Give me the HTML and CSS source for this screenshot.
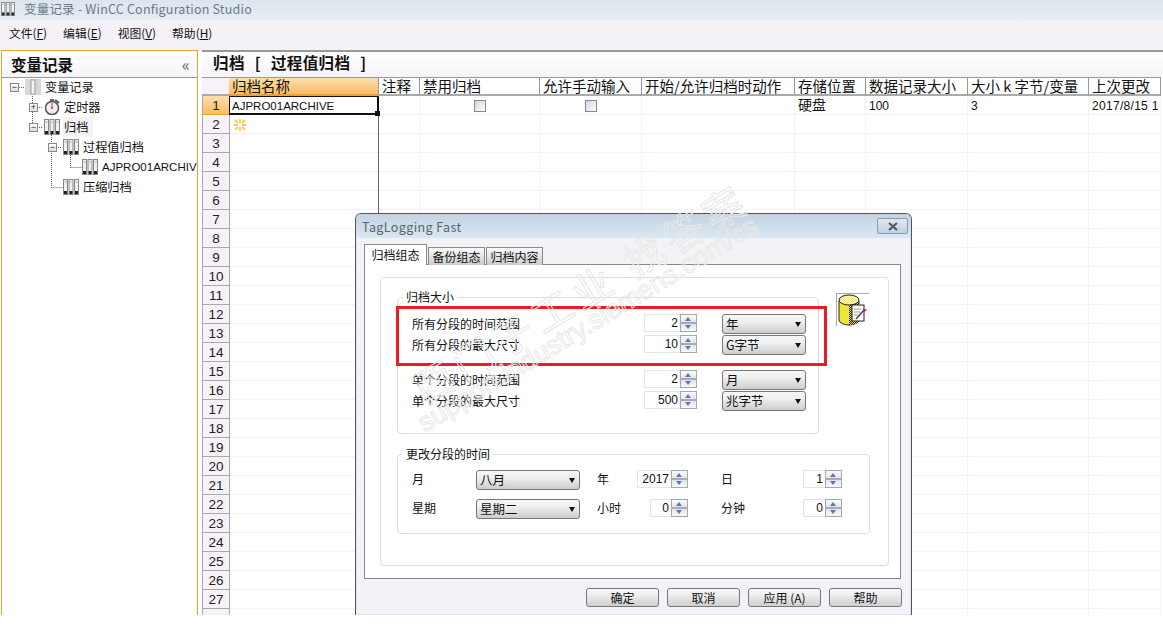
FILE: index.html
```html
<!DOCTYPE html>
<html>
<head>
    <meta charset="utf-8">
    <title>WinCC Configuration Studio</title>
    <link rel="stylesheet" href="styles.css">
</head>
<body>
    <svg class="defs" width="0" height="0">
        <symbol id="binders" viewBox="0 0 16 16">
            <g stroke="#888" stroke-width="1">
                <rect x="0.5" y="0.5" width="4" height="15" fill="#f0f0f0"/>
                <rect x="6" y="0.5" width="4" height="15" fill="#f0f0f0"/>
                <rect x="11.500" y="0.5" width="4" height="15" fill="#f0f0f0"/>
            </g>
            <path d="M1 12h3v3H1zM6.500 12h3v3h-3zM12 12h3v3h-3z" fill="#222"/>
            <path d="M1 3h3M6.500 3h3M12 3h3" stroke="#bbb"/>
        </symbol>
        <pattern id="dither" width="2" height="2" patternUnits="userSpaceOnUse">
            <rect width="2" height="2" fill="#e8e04a"/>
            <rect width="1" height="1" fill="#222"/>
            <rect x="1" y="1" width="1" height="1" fill="#222"/>
        </pattern>
        <pattern id="dither-top" width="2" height="2" patternUnits="userSpaceOnUse">
            <rect width="2" height="2" fill="#f2ea3c"/>
            <rect width="1" height="1" fill="#fff"/>
            <rect x="1" y="1" width="1" height="1" fill="#fff"/>
        </pattern>
    </svg>

    <div class="app">
        <div class="titlebar">
            <svg class="titlebar-icon"><use href="#binders"/></svg>
            <span>变量记录 - WinCC Configuration Studio</span>
        </div>

        <div class="menubar">
            <span>文件(<u>F</u>)</span>
            <span>编辑(<u>E</u>)</span>
            <span>视图(<u>V</u>)</span>
            <span>帮助(<u>H</u>)</span>
        </div>

        <div class="main">
            <!-- Left tree panel -->
            <div class="sidebar">
                <div class="sidebar-head">
                    <span>变量记录</span>
                    <span class="collapse">«</span>
                </div>
                <div class="tree">
                    <svg class="tree-lines" width="197" height="130">
                        <path d="M17 10.500h7M32.500 17v34M37 30.500h6M37 50.500h6M51.500 58v53M56 70.500h6M51.500 110.500h11M70.500 78v13M70.500 90.500h11" fill="none" stroke="#666" stroke-dasharray="1 1"/>
                    </svg>
                    <div class="node lvl1">
                        <span class="expander">−</span>
                        <svg class="node-icon root-icon" viewBox="0 0 16 16">
                            <rect width="16" height="16" fill="#d8d8d8"/>
                            <rect x="6" y="1" width="4" height="14" fill="#f4f4f4" stroke="#999"/>
                        </svg>
                        <span class="node-text">变量记录</span>
                    </div>
                    <div class="node lvl2">
                        <span class="expander">+</span>
                        <svg class="node-icon" viewBox="0 0 16 16">
                            <path d="M11 1l4 3" stroke="#555" stroke-width="2"/>
                            <rect x="6" y="0" width="4" height="2" fill="#666"/>
                            <circle cx="8" cy="9" r="6.500" fill="#f2f0ec" stroke="#555" stroke-width="1.500"/>
                            <path d="M8 9V4" stroke="#c33"/>
                            <circle cx="8" cy="9" r="1" fill="#944"/>
                        </svg>
                        <span class="node-text">定时器</span>
                    </div>
                    <div class="node lvl2">
                        <span class="expander">−</span>
                        <svg class="node-icon"><use href="#binders"/></svg>
                        <span class="node-text picked">归档</span>
                    </div>
                    <div class="node lvl3">
                        <span class="expander">−</span>
                        <svg class="node-icon"><use href="#binders"/></svg>
                        <span class="node-text">过程值归档</span>
                    </div>
                    <div class="node lvl4">
                        <span class="expander blank"></span>
                        <svg class="node-icon"><use href="#binders"/></svg>
                        <span class="node-text latin">AJPRO01ARCHIVE</span>
                    </div>
                    <div class="node lvl3">
                        <span class="expander blank"></span>
                        <svg class="node-icon"><use href="#binders"/></svg>
                        <span class="node-text">压缩归档</span>
                    </div>
                </div>
            </div>

            <!-- Archive table -->
            <div class="content">
                <div class="content-head">归档 [ 过程值归档 ]</div>
                <table class="sheet">
                    <colgroup>
                        <col class="c-num"><col class="c-name"><col class="c-note"><col class="c-off"><col class="c-manual"><col class="c-action"><col class="c-store"><col class="c-size"><col class="c-var"><col class="c-date">
                    </colgroup>
                    <tr>
                        <th class="corner"></th>
                        <th class="picked-col">归档名称</th>
                        <th>注释</th>
                        <th>禁用归档</th>
                        <th>允许手动输入</th>
                        <th>开始/允许归档时动作</th>
                        <th>存储位置</th>
                        <th>数据记录大小</th>
                        <th>大小 k 字节/变量</th>
                        <th>上次更改</th>
                    </tr>
                    <tr class="first-row">
                        <th class="num picked-row">1</th>
                        <td class="name active">AJPRO01ARCHIVE<i class="handle"></i></td>
                        <td></td>
                        <td class="mid"><span class="check"></span></td>
                        <td class="mid"><span class="check"></span></td>
                        <td></td>
                        <td class="cjk">硬盘</td>
                        <td class="val">100</td>
                        <td class="val">3</td>
                        <td class="val clip">2017/8/15 1</td>
                    </tr>
                    <tr>
                        <th class="num">2</th>
                        <td class="name">
                            <svg class="new-row" viewBox="0 0 12 12">
                                <path d="M6 0v4M6 8v4M0 6h4M8 6h4M1 1l3 3M8 8l3 3M11 1L8 4M4 8l-3 3" stroke="#f2cf4e" stroke-width="1.800"/>
                            </svg>
                        </td>
                        <td></td><td></td><td></td><td></td><td></td><td></td><td></td><td></td>
                    </tr>
                    <tr><th class="num">3</th><td class="name"></td><td></td><td></td><td></td><td></td><td></td><td></td><td></td><td></td></tr>
                    <tr><th class="num">4</th><td class="name"></td><td></td><td></td><td></td><td></td><td></td><td></td><td></td><td></td></tr>
                    <tr><th class="num">5</th><td class="name"></td><td></td><td></td><td></td><td></td><td></td><td></td><td></td><td></td></tr>
                    <tr><th class="num">6</th><td class="name"></td><td></td><td></td><td></td><td></td><td></td><td></td><td></td><td></td></tr>
                    <tr><th class="num">7</th><td class="name"></td><td></td><td></td><td></td><td></td><td></td><td></td><td></td><td></td></tr>
                    <tr><th class="num">8</th><td class="name"></td><td></td><td></td><td></td><td></td><td></td><td></td><td></td><td></td></tr>
                    <tr><th class="num">9</th><td class="name"></td><td></td><td></td><td></td><td></td><td></td><td></td><td></td><td></td></tr>
                    <tr><th class="num">10</th><td class="name"></td><td></td><td></td><td></td><td></td><td></td><td></td><td></td><td></td></tr>
                    <tr><th class="num">11</th><td class="name"></td><td></td><td></td><td></td><td></td><td></td><td></td><td></td><td></td></tr>
                    <tr><th class="num">12</th><td class="name"></td><td></td><td></td><td></td><td></td><td></td><td></td><td></td><td></td></tr>
                    <tr><th class="num">13</th><td class="name"></td><td></td><td></td><td></td><td></td><td></td><td></td><td></td><td></td></tr>
                    <tr><th class="num">14</th><td class="name"></td><td></td><td></td><td></td><td></td><td></td><td></td><td></td><td></td></tr>
                    <tr><th class="num">15</th><td class="name"></td><td></td><td></td><td></td><td></td><td></td><td></td><td></td><td></td></tr>
                    <tr><th class="num">16</th><td class="name"></td><td></td><td></td><td></td><td></td><td></td><td></td><td></td><td></td></tr>
                    <tr><th class="num">17</th><td class="name"></td><td></td><td></td><td></td><td></td><td></td><td></td><td></td><td></td></tr>
                    <tr><th class="num">18</th><td class="name"></td><td></td><td></td><td></td><td></td><td></td><td></td><td></td><td></td></tr>
                    <tr><th class="num">19</th><td class="name"></td><td></td><td></td><td></td><td></td><td></td><td></td><td></td><td></td></tr>
                    <tr><th class="num">20</th><td class="name"></td><td></td><td></td><td></td><td></td><td></td><td></td><td></td><td></td></tr>
                    <tr><th class="num">21</th><td class="name"></td><td></td><td></td><td></td><td></td><td></td><td></td><td></td><td></td></tr>
                    <tr><th class="num">22</th><td class="name"></td><td></td><td></td><td></td><td></td><td></td><td></td><td></td><td></td></tr>
                    <tr><th class="num">23</th><td class="name"></td><td></td><td></td><td></td><td></td><td></td><td></td><td></td><td></td></tr>
                    <tr><th class="num">24</th><td class="name"></td><td></td><td></td><td></td><td></td><td></td><td></td><td></td><td></td></tr>
                    <tr><th class="num">25</th><td class="name"></td><td></td><td></td><td></td><td></td><td></td><td></td><td></td><td></td></tr>
                    <tr><th class="num">26</th><td class="name"></td><td></td><td></td><td></td><td></td><td></td><td></td><td></td><td></td></tr>
                    <tr><th class="num">27</th><td class="name"></td><td></td><td></td><td></td><td></td><td></td><td></td><td></td><td></td></tr>
                    <tr><th class="num"></th><td class="name"></td><td></td><td></td><td></td><td></td><td></td><td></td><td></td><td></td></tr>
                </table>
            </div>
        </div>

        <!-- TagLogging Fast dialog -->
        <div class="dialog">
            <div class="dialog-title">
                <span>TagLogging Fast</span>
                <span class="close">
                    <svg width="12" height="9" viewBox="0 0 12 9"><path d="M2 1l8 7M10 1L2 8" stroke="#556" stroke-width="2.200"/></svg>
                </span>
            </div>
            <div class="dialog-body">
                <div class="tabs">
                    <span class="tab on">归档组态</span>
                    <span class="tab">备份组态</span>
                    <span class="tab">归档内容</span>
                </div>
                <div class="tab-panel">
                    <div class="inner-box">
                        <div class="size-row">
                            <fieldset class="group group-size">
                                <legend>归档大小</legend>
                                <div class="size-set">
                                    <span>所有分段的时间范围</span>
                                    <span class="spin"><span class="spin-val">2</span><span class="spin-btn"></span></span>
                                    <span class="combo size-combo">年</span>
                                    <span>所有分段的最大尺寸</span>
                                    <span class="spin"><span class="spin-val">10</span><span class="spin-btn"></span></span>
                                    <span class="combo size-combo">G字节</span>
                                </div>
                                <div class="size-set next">
                                    <span>单个分段的时间范围</span>
                                    <span class="spin"><span class="spin-val">2</span><span class="spin-btn"></span></span>
                                    <span class="combo size-combo">月</span>
                                    <span>单个分段的最大尺寸</span>
                                    <span class="spin"><span class="spin-val">500</span><span class="spin-btn"></span></span>
                                    <span class="combo size-combo">兆字节</span>
                                </div>
                            </fieldset>
                            <svg class="db-icon" viewBox="0 0 33 33">
                                <path d="M.5 33V.5H33" fill="none" stroke="#aaa"/>
                                <path d="M3 8v19c0 3 6 5 10 5s10-2 10-5V8z" fill="#efe63a" stroke="#222"/>
                                <path d="M13 10h10v17c0 3-5 5-10 5z" fill="url(#dither)"/>
                                <ellipse cx="13" cy="7" rx="10" ry="5" fill="url(#dither-top)" stroke="#222"/>
                                <rect x="16" y="12" width="12" height="16" fill="#fff" stroke="#222"/>
                                <path d="M18 16h7M18 19h6M18 22h4" stroke="#999"/>
                                <path d="M20 26l8-9" stroke="#444" stroke-width="1.500"/>
                                <path d="M27 15l4 2-3 2z" fill="#d22"/>
                            </svg>
                        </div>
                        <fieldset class="group group-time">
                            <legend>更改分段的时间</legend>
                            <div class="time-set">
                                <span>月</span>
                                <span class="combo">八月</span>
                                <span class="after-combo">年</span>
                                <span class="spin wide"><span class="spin-val">2017</span><span class="spin-btn"></span></span>
                                <span class="after-spin">日</span>
                                <span class="spin small"><span class="spin-val">1</span><span class="spin-btn"></span></span>
                                <span>星期</span>
                                <span class="combo">星期二</span>
                                <span class="after-combo">小时</span>
                                <span class="spin small end"><span class="spin-val">0</span><span class="spin-btn"></span></span>
                                <span class="after-spin">分钟</span>
                                <span class="spin small"><span class="spin-val">0</span><span class="spin-btn"></span></span>
                            </div>
                        </fieldset>
                    </div>
                </div>
                <div class="dialog-buttons">
                    <span class="btn">确定</span>
                    <span class="btn">取消</span>
                    <span class="btn">应用 (A)</span>
                    <span class="btn">帮助</span>
                </div>
            </div>
        </div>

        <!-- Annotation and watermark over the dialog -->
        <div class="red-box"></div>
        <div class="mark mark-big">西门子工业 找答案</div>
        <div class="mark mark-small">support.industry.siemens.com/cs</div>
    </div>
</body>
</html>
```

FILE: styles.css
```css
* {
    box-sizing: border-box;
}

body {
    margin: 0;
    background: #fff;
    color: #111;
    font-family: "Noto Sans CJK SC", "Liberation Sans", sans-serif;
    font-size: 12px;
}

.defs {
    position: absolute;
}

.app {
    position: relative;
    width: 1163px;
    height: 615px;
    overflow: hidden;
}

.titlebar {
    display: flex;
    align-items: center;
    gap: 9px;
    height: 20px;
    padding: 0 0 3px 1px;
    background: linear-gradient(#dce5ee, #e6ecf3);
    color: #6b7a8a;
    font-size: 12.500px;
    letter-spacing: .2px;
}

.titlebar-icon {
    width: 14px;
    height: 14px;
}

.menubar {
    display: flex;
    gap: 16px;
    align-items: center;
    height: 30px;
    padding: 0 0 5px 9px;
    background: #f5f2f7;
    font-size: 11.800px;
}

.main {
    display: flex;
    gap: 4px;
    height: 565px;
    padding-left: 1px;
}

/* left panel */
.sidebar {
    width: 197px;
    border: 1px solid #f0a22e;
    border-bottom: 0;
}

.sidebar-head {
    display: flex;
    justify-content: space-between;
    align-items: center;
    height: 27px;
    padding: 0 7px 0 9px;
    border-bottom: 1px solid #999;
    background: linear-gradient(#fff, #f6f3f7);
    font-size: 15.500px;
    font-weight: 700;
}

.collapse {
    color: #666;
    font-size: 17px;
    font-weight: 400;
    line-height: 18px;
}

.tree {
    position: relative;
    margin-top: -1px;
}

.tree-lines {
    position: absolute;
    top: 0;
    left: -2px;
}

.node {
    position: relative;
    display: flex;
    align-items: center;
    height: 20px;
    white-space: nowrap;
    overflow: hidden;
}

.lvl1 { padding-left: 8px; }
.lvl2 { padding-left: 27px; }
.lvl3 { padding-left: 46px; }
.lvl4 { padding-left: 65px; }

.expander {
    display: flex;
    align-items: center;
    justify-content: center;
    width: 9px;
    height: 9px;
    flex: none;
    border: 1px solid #888;
    background: linear-gradient(#fff, #ddd);
    color: #225;
    font: 9px/1 "Liberation Sans", sans-serif;
}

.expander.blank {
    border: 0;
    background: none;
}

.node-icon {
    width: 16px;
    height: 16px;
    flex: none;
    margin: 0 4px 0 6px;
}

.node-text {
    font-size: 12.200px;
}

.picked {
    padding: 2px 5px 2px 1px;
    margin-left: -1px;
    background: #f5f1f6;
}

.latin {
    font-family: "Liberation Sans", sans-serif;
    font-size: 11.500px;
}

/* table */
.content {
    width: 962px;
    border-top: 2px solid #999;
}

.content-head {
    height: 25px;
    padding-left: 11px;
    background: linear-gradient(#fff, #f6f3f7);
    font-size: 15.500px;
    font-weight: 700;
    line-height: 21px;
    letter-spacing: .4px;
    word-spacing: 6px;
}

.sheet {
    border-collapse: separate;
    border-spacing: 0;
    table-layout: fixed;
    width: 959px;
    font-family: "Liberation Sans", sans-serif;
    font-size: 12px;
}

.c-num { width: 27px; }
.c-name { width: 150px; }
.c-note { width: 41px; }
.c-off { width: 120px; }
.c-manual { width: 102px; }
.c-action { width: 153px; }
.c-store { width: 71px; }
.c-size { width: 102px; }
.c-var { width: 121px; }
.c-date { width: 72px; }

.sheet tr {
    height: 19px;
}

.sheet th,
.sheet td {
    padding: 0 0 0 3px;
    overflow: hidden;
    white-space: nowrap;
    text-align: left;
}

.sheet tr:first-child th {
    height: 19px;
    overflow: visible;
    border-top: 1px solid #999;
    border-right: 1px solid #999;
    border-bottom: 2px solid #aaa;
    background: #fff;
    font-family: "Noto Sans CJK SC", sans-serif;
    font-size: 14.500px;
    font-weight: 400;
    line-height: 16px;
}

.sheet tr:first-child .corner {
    border-right: 0;
    background: #f6f2f7;
}

.sheet tr:first-child .picked-col {
    background: linear-gradient(#fde0ae, #f9bb66);
    border-bottom-color: #f0a030;
}

.sheet td {
    height: 19px;
    border-right: 1px solid #f5f1f5;
    border-bottom: 1px solid #f5f1f5;
    line-height: 17px;
}

.sheet .num {
    height: 19px;
    padding: 1px 0 0;
    border-left: 1px solid #aaa;
    border-bottom: 1px solid #aaa;
    background: #f6f2f7;
    font-weight: 400;
    text-align: center;
    color: #222;
    font-family: "Liberation Sans", sans-serif;
    font-size: 13.500px;
    line-height: 16px;
}

.sheet .picked-row {
    background: linear-gradient(#fde0ae, #f9bb66);
    border-bottom-color: #f0a030;
}

.sheet .name {
    padding-left: 2px;
    border-left: 1px solid #aaa;
    border-right: 1px solid #666;
    border-bottom: 0;
    background: linear-gradient(to top, #f5f1f5 1px, transparent 1px);
}

.sheet .active {
    position: relative;
    overflow: visible;
    padding-top: 1px;
    border: 1px solid #111;
    border-bottom: 2px solid #111;
    border-right: 2px solid #111;
    background: none;
    font-size: 11.500px;
    line-height: 14px;
}

.handle {
    position: absolute;
    right: -3px;
    bottom: -3px;
    width: 5px;
    height: 5px;
    background: #111;
}

.sheet .mid {
    padding: 1px 0 0;
    text-align: center;
}

.sheet .cjk {
    overflow: visible;
    padding-bottom: 2px;
    font-family: "Noto Sans CJK SC", sans-serif;
    font-size: 14px;
    line-height: 14px;
}

.sheet .val {
    padding-top: 2px;
    line-height: 15px;
}

.sheet .clip {
    letter-spacing: .3px;
}

.check {
    display: block;
    width: 12px;
    height: 12px;
    margin: 0 auto;
    border: 1px solid #888;
    background: linear-gradient(135deg, #d0d8e6, #fbfbfd);
}

.new-row {
    display: block;
    width: 12px;
    height: 12px;
    margin-left: 2px;
}

/* dialog */
.dialog {
    position: absolute;
    top: 213px;
    left: 355px;
    width: 557px;
    height: 402px;
    border: 1px solid #555;
    border-bottom: 0;
    border-radius: 6px 6px 0 0;
    background: #f5f2f7;
    box-shadow: inset 0 0 0 1px #dde6f0;
    font-family: "Noto Sans CJK SC", "Liberation Sans", sans-serif;
    font-size: 12px;
}

.dialog-title {
    display: flex;
    justify-content: space-between;
    align-items: center;
    height: 24px;
    padding: 0 3px 0 6px;
    border-radius: 5px 5px 0 0;
    background: linear-gradient(#c3d3e2, #dbe7f2);
    color: #59636d;
    font-size: 12.500px;
    letter-spacing: .4px;
}

.close {
    display: flex;
    align-items: center;
    justify-content: center;
    width: 31px;
    height: 16px;
    border: 1px solid #8a9bb0;
    border-radius: 2px;
    background: linear-gradient(#dfe8f0, #c2d0de);
}

.dialog-body {
    padding: 6px 10px 0 8px;
}

.tabs {
    display: flex;
    align-items: flex-end;
    gap: 1px;
    height: 21px;
    margin-bottom: -1px;
}

.tab {
    position: relative;
    display: flex;
    align-items: center;
    justify-content: center;
    width: 57px;
    height: 18px;
    padding-bottom: 1px;
    border: 1px solid #888;
    border-bottom: 0;
    background: linear-gradient(#fbfbfb, #ccc);
}

.tab.on {
    z-index: 1;
    width: 63px;
    height: 21px;
    background: #fff;
    padding-bottom: 2px;
}

.tab-panel {
    height: 315px;
    width: 537px;
    padding: 12px 12px 0 15px;
    border: 1px solid #888;
    background: #fff;
}

.inner-box {
    height: 289px;
    width: 509px;
    padding: 12px 0 0 16px;
    border: 1px solid #d6e0ea;
    border-radius: 4px;
}

.size-row {
    display: flex;
    align-items: flex-start;
}

.group {
    margin: 0;
    padding: 0;
    min-width: 0;
    border: 1px solid #d6e0ea;
    border-radius: 4px;
}

.group legend {
    padding: 0 3px;
    margin-left: 5px;
    line-height: 14px;
    font-size: 12px;
}

.group-size {
    width: 422px;
    height: 144px;
    padding-top: 10px;
}

.db-icon {
    width: 33px;
    height: 33px;
    margin: 3px 0 0 17px;
}

.size-set {
    display: grid;
    grid-template-columns: 232px 53px 109px;
    grid-auto-rows: 21px;
    align-items: start;
    margin-left: 14px;
    line-height: 19px;
}

.size-set.next {
    margin-top: 14px;
}

.size-combo {
    margin-left: 25px;
    width: 84px;
}

.spin {
    display: flex;
    width: 53px;
    height: 18px;
    border: 1px solid #dfe5ec;
    border-right: 0;
    border-radius: 2px;
    line-height: 16px;
    font-family: "Liberation Sans", sans-serif;
    font-size: 12px;
}

.spin-val {
    flex: 1;
    padding-right: 2px;
    text-align: right;
}

.spin-btn {
    position: relative;
    width: 17px;
    margin: -1px 0;
    border: 1px solid #a8a8a8;
    background: linear-gradient(#fafafa, #e4e6ee 44%, #aaa 44%, #aaa 56%, #e4e6ee 56%, #f8f8f8);
}

.spin-btn::before,
.spin-btn::after {
    content: "";
    position: absolute;
    left: 4px;
    border-left: 3.500px solid transparent;
    border-right: 3.500px solid transparent;
}

.spin-btn::before {
    top: 2px;
    border-bottom: 4px solid #5a78b8;
}

.spin-btn::after {
    bottom: 2px;
    border-top: 4px solid #5a78b8;
}

.spin.wide {
    width: 51px;
}

.spin.small {
    width: 39px;
}

.spin.end {
    justify-self: end;
    width: 38px;
}

.combo {
    position: relative;
    display: block;
    height: 20px;
    padding-left: 3px;
    border: 1px solid #777;
    border-radius: 3px;
    background: linear-gradient(#f6f6f6, #f0f0f0 35%, #cdcdcd);
    font-size: 12.500px;
    line-height: 18px;
}

.combo::after {
    content: "";
    position: absolute;
    top: 7px;
    right: 4px;
    border-left: 3.500px solid transparent;
    border-right: 3.500px solid transparent;
    border-top: 5px solid #111;
}

.group-time {
    width: 473px;
    height: 87px;
    margin-top: 13px;
    padding-top: 9px;
}

.time-set {
    display: grid;
    grid-template-columns: 64px 104px 57px 51px 115px 39px;
    grid-auto-rows: 29px;
    align-items: start;
    margin-left: 14px;
    line-height: 18px;
}

.after-combo {
    padding-left: 17px;
}

.after-spin {
    padding-left: 33px;
}

.dialog-buttons {
    display: flex;
    justify-content: flex-end;
    gap: 8px;
    padding-top: 9px;
    margin-right: -1px;
}

.btn {
    display: block;
    width: 73px;
    height: 19px;
    border: 1px solid #777;
    border-radius: 3px;
    background: linear-gradient(#f8f8f8, #f0f0f0 30%, #cfcfcf);
    line-height: 17px;
    text-align: center;
}

/* overlays */
.red-box {
    position: absolute;
    top: 306px;
    left: 396px;
    width: 431px;
    height: 60px;
    border: 3px solid #ed1c24;
}

.mark {
    position: absolute;
    white-space: nowrap;
    color: transparent;
    -webkit-text-stroke: 1px #e8e8e8;
    transform-origin: 0 50%;
    transform: rotate(-31deg);
    pointer-events: none;
}

.mark-big {
    top: 369px;
    left: 416px;
    font-size: 40px;
    letter-spacing: 6px;
    line-height: 44px;
}

.mark-small {
    top: 410px;
    left: 420px;
    font-family: "Liberation Sans", sans-serif;
    font-size: 27px;
    line-height: 30px;
}
```
